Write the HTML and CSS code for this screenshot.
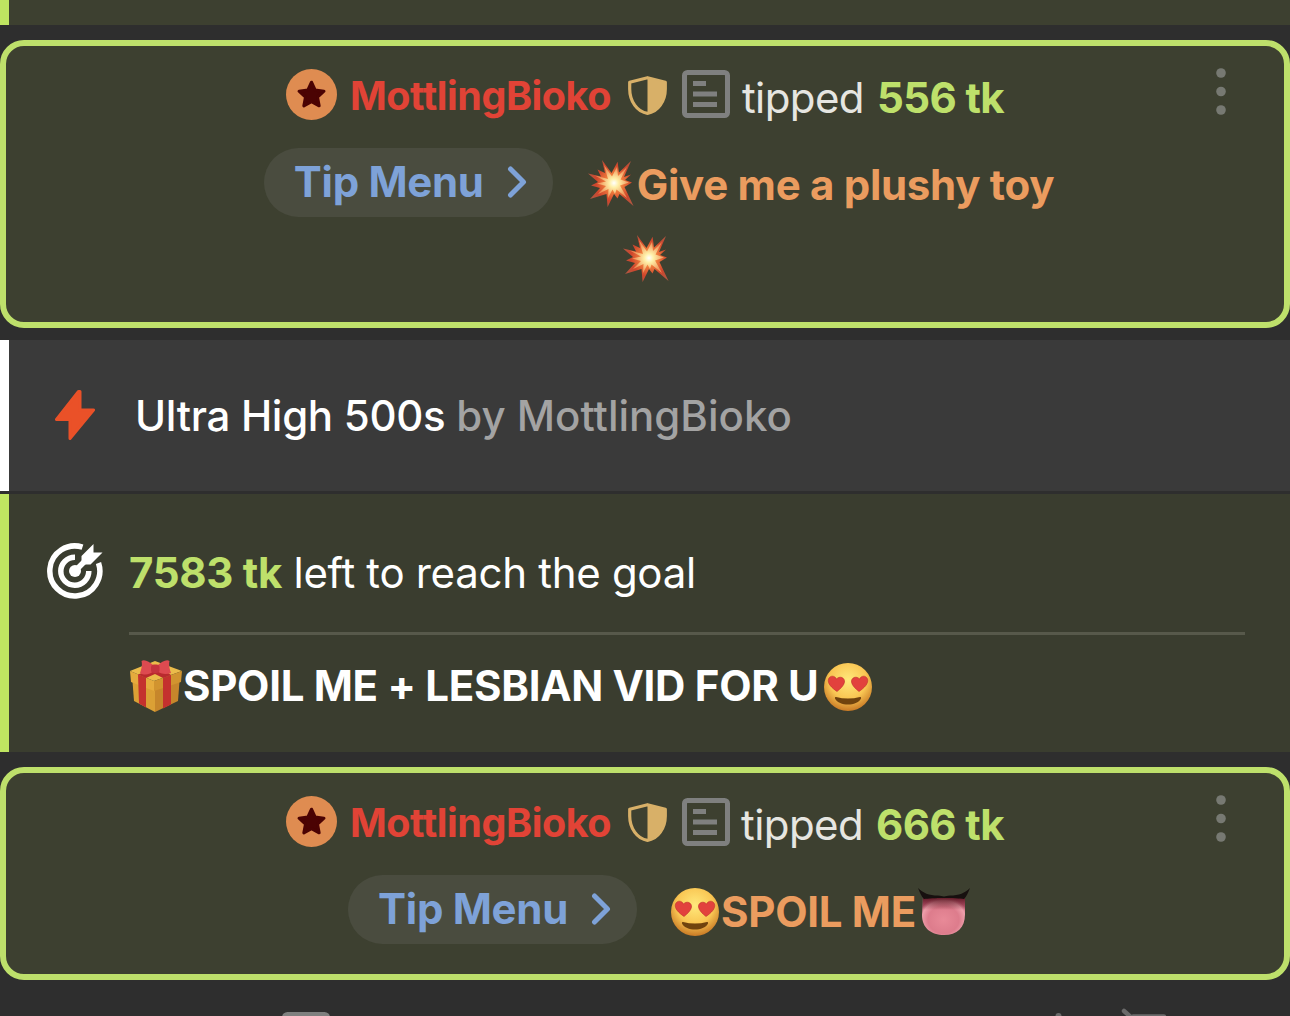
FILE: index.html
```
<!DOCTYPE html>
<html lang="en">
<head>
  <meta charset="UTF-8">
  <meta name="viewport" content="width=device-width, initial-scale=1.0">
  <title>Chat</title>
  <link rel="stylesheet" href="styles.css">
</head>
<body>
  <!-- shared icons -->
  <svg class="sprite" width="0" height="0">
    <defs>
      <radialGradient id="face-fill" cx="50%" cy="36%" r="64%">
        <stop offset="0" stop-color="#ffe97c"/>
        <stop offset="0.6" stop-color="#f9c653"/>
        <stop offset="1" stop-color="#c97a25"/>
      </radialGradient>
      <radialGradient id="boom-red" gradientUnits="userSpaceOnUse" cx="26" cy="23" r="26">
        <stop offset="0" stop-color="#ffd766"/>
        <stop offset="0.35" stop-color="#ee7a3c"/>
        <stop offset="0.7" stop-color="#cf452c"/>
        <stop offset="1" stop-color="#b4553f"/>
      </radialGradient>
      <radialGradient id="boom-core" gradientUnits="userSpaceOnUse" cx="26" cy="23" r="15">
        <stop offset="0" stop-color="#ffffff"/>
        <stop offset="0.3" stop-color="#fff0a8"/>
        <stop offset="1" stop-color="#ef955a"/>
      </radialGradient>
      <radialGradient id="tongue-fill" cx="50%" cy="60%" r="60%">
        <stop offset="0" stop-color="#e88a98"/>
        <stop offset="0.6" stop-color="#dd7c8c"/>
        <stop offset="0.85" stop-color="#ee9fab"/>
        <stop offset="1" stop-color="#c9607a"/>
      </radialGradient>
      <linearGradient id="tongue-shade" x1="0" y1="0" x2="0" y2="1">
        <stop offset="0" stop-color="#5a1722"/>
        <stop offset="1" stop-color="#5a1722" stop-opacity="0"/>
      </linearGradient>
    </defs>
    <symbol id="star" viewBox="0 0 50 50">
      <circle cx="25" cy="25" r="25" fill="#df8c51"/>
      <path d="M25 13l3.6 7.7 8.6 1.1-6.3 5.9 1.6 8.4-7.5-4.1-7.5 4.1 1.6-8.4-6.3-5.9 8.6-1.1z" fill="#4b0303" stroke="#4b0303" stroke-width="3" stroke-linejoin="round"/>
    </symbol>
    <symbol id="shield" viewBox="0 0 39 39">
      <path d="M19.500 1.700L37.300 6.300V13C37.300 25 30 36 19.500 37.300 9 36 1.700 25 1.700 13V6.300z" fill="none" stroke="#d8b068" stroke-width="3.200" stroke-linejoin="round"/>
      <path d="M19.500 1.700L37.300 6.300V13C37.300 25 30 36 19.500 37.300z" fill="#d8b068"/>
    </symbol>
    <symbol id="note" viewBox="0 0 48 48">
      <rect x="2.500" y="2.500" width="43" height="43" rx="3" fill="none" stroke="#7f807f" stroke-width="5"/>
      <path d="M11 13.500h13M11 24h24M11 34.500h24" stroke="#7f807f" stroke-width="5.200"/>
    </symbol>
    <symbol id="dots" viewBox="0 0 10 48">
      <circle cx="5" cy="5" r="4.800"/><circle cx="5" cy="23.500" r="4.800"/><circle cx="5" cy="42" r="4.800"/>
    </symbol>
    <symbol id="chevron" viewBox="0 0 20 32">
      <path d="M3.500 3l13 13-13 13" fill="none" stroke="#7ea2d8" stroke-width="5" stroke-linecap="round" stroke-linejoin="round"/>
    </symbol>
    <symbol id="boom" viewBox="0 0 46 48">
      <path d="M14 0L23.500 13 29.600 1.700 31 12.500 43 1 36 17 43 14.500 37 20 44 22.600 36.500 27 45.500 46 31.500 34 29.500 38.500 26 34 19.600 47 18.500 34 2 39 12 28 3 25.500 10 22 0 13.500 13 16.500 9.500 9.500 17 13z" fill="url(#boom-red)"/>
      <path d="M16 5L24 16.500 29 7 30 16 39 7 32.500 19.500 41 22.600 32 25.500 39 38 28.500 29.500 27 34 24.500 29.500 20 38 20.500 29 10 34 18 26 9 23.500 18 21.500 7 15.500 20 19z" fill="url(#boom-core)"/>
    </symbol>
    <symbol id="love" viewBox="0 0 50 50">
      <circle cx="25" cy="25" r="24" fill="url(#face-fill)"/>
      <path d="M14 29.500C9 26 4 21.500 5.500 17 7 13 12 13.500 13.500 17c3-3.500 8.500-1.500 8 3-.6 4-4.500 7-7.500 9.500zM36 29.500c5-3.500 10-8 8.500-12.500C43 13 38 13.500 36.500 17c-3-3.500-8.500-1.500-8 3 .6 4 4.500 7 7.500 9.500z" fill="#e2413d" stroke="#bd302c" stroke-width=".6"/>
      <path d="M13 35q12 3 24 0c1 0 1.300.7 1 1.500-4 8-22 8-26 0-.3-.8 0-1.500 1-1.500z" fill="#70430e"/>
    </symbol>
    <symbol id="gift" viewBox="0 0 52 52">
      <path d="M2 15l23 8v29L4 41z" fill="#dba035"/>
      <path d="M50 15l-25 8v29l23-11z" fill="#c6862b"/>
      <path d="M0 11L25 1l27 10-28 10z" fill="#ebbb4a"/>
      <path d="M0 11l24 10v10L1 22z" fill="#e5ab3d"/>
      <path d="M52 11L24 21v10l27-9z" fill="#d1942f"/>
      <path d="M8 14.500l8 3.300V47.500l-7-4zM41 15l-8 3V48.500l8-4z" fill="#c4312e"/>
      <path d="M8 14.500L20 10h14l7 5-8 3-8-4-9 4z" fill="#b92a2e"/>
      <path d="M24 6C19 1 14-1 11.500 1c1 4 0 8-1.500 12 5 3 10 1 14.500-2zM27 6c5-5 10-7 12.500-5-1 4 0 8 1.500 12-5 2-10 1-14.500-2z" fill="#dd4a50"/>
      <rect x="21" y="4.500" width="8.500" height="8.500" rx="3" fill="#c4333e"/>
    </symbol>
    <symbol id="tongue" viewBox="0 0 52 48">
      <path d="M5 9h42v17c0 14-8 21-21 21S4 40 4 27z" fill="url(#tongue-fill)"/>
      <path d="M5 9h42v13H5z" fill="url(#tongue-shade)"/>
      <path d="M0 0c5 5 11 7.500 20 7.500 3 0 4 1 6 1s3-1 6-1C41 7.500 47 5 52 0c-2 5-3.500 8.500-6 11-7-1.500-33-1.500-40 0C3.500 8.500 2 5 0 0z" fill="#17100f"/>
    </symbol>
  </svg>

  <main class="chat">
    <div class="strip"></div>

    <div class="tip tip-first">
      <div class="tip-line">
        <svg class="star"><use href="#star"/></svg>
        <span class="user">MottlingBioko</span>
        <svg class="shield"><use href="#shield"/></svg>
        <svg class="note"><use href="#note"/></svg>
        <span class="tipped">tipped</span>
        <span class="amount">556 tk</span>
      </div>
      <div class="menu-line">
        <span class="pill">Tip Menu <svg class="chevron"><use href="#chevron"/></svg></span>
        <svg class="boom"><use href="#boom"/></svg>
        <span class="item">Give me a plushy toy</span>
      </div>
      <div class="wrap-line">
        <svg class="boom"><use href="#boom"/></svg>
      </div>
      <svg class="dots"><use href="#dots"/></svg>
    </div>

    <div class="notice">
      <svg class="bolt" viewBox="0 0 40 50"><path d="M23.500 1.500L1.500 29.500H15V48.500L38.500 20H25V1.500z" fill="#ea5128" stroke="#ea5128" stroke-width="3" stroke-linejoin="round"/></svg>
      <p class="notice-text">Ultra High 500s <span>by MottlingBioko</span></p>
    </div>

    <div class="goal">
      <svg class="target" viewBox="0 0 56 56">
        <g fill="none" stroke="#fff" stroke-width="5.500">
          <path d="M35.500 4.200A25 25 0 1 0 51.500 20"/>
          <path d="M28 14.200A14 14 0 1 0 41.800 28"/>
        </g>
        <circle cx="28" cy="28" r="6" fill="#fff"/>
        <path d="M28 28L41 15" stroke="#fff" stroke-width="5.500"/>
        <path d="M34.500 21.500V13L46.500 1V9.500H55.500L43.500 21.500z" fill="#fff"/>
      </svg>
      <div class="goal-body">
        <p class="goal-left"><b>7583 tk</b> left to reach the goal</p>
        <div class="goal-title">
          <svg class="gift"><use href="#gift"/></svg>
          <span>SPOIL ME + LESBIAN VID FOR U</span>
          <svg class="love"><use href="#love"/></svg>
        </div>
      </div>
    </div>

    <div class="tip tip-second">
      <div class="tip-line">
        <svg class="star"><use href="#star"/></svg>
        <span class="user">MottlingBioko</span>
        <svg class="shield"><use href="#shield"/></svg>
        <svg class="note"><use href="#note"/></svg>
        <span class="tipped">tipped</span>
        <span class="amount">666 tk</span>
      </div>
      <div class="menu-line">
        <span class="pill">Tip Menu <svg class="chevron"><use href="#chevron"/></svg></span>
        <svg class="love"><use href="#love"/></svg>
        <span class="item">SPOIL ME</span>
        <svg class="tongue"><use href="#tongue"/></svg>
      </div>
      <svg class="dots"><use href="#dots"/></svg>
    </div>

    <div class="next">
      <svg class="next-note"><use href="#note"/></svg>
      <svg class="next-icons" viewBox="0 0 110 10">
        <circle cx="3.500" cy="9" r="3" fill="#6b6b6b"/>
        <path d="M69 4l9 8M78 9.500h31" fill="none" stroke="#6b6b6b" stroke-width="4.500" stroke-linecap="round"/>
      </svg>
    </div>
  </main>
</body>
</html>
```
FILE: styles.css
```
* {
  box-sizing: border-box;
}
body {
  margin: 0;
  background: #2e2e2e;
  color: #fff;
  font-family: Inter, "Liberation Sans", sans-serif;
  font-size: 42px;
  line-height: 52px;
  letter-spacing: -0.3px;
}
p {
  margin: 0;
}
svg {
  display: block;
  flex: none;
}
.sprite {
  position: absolute;
}
.chat {
  height: 1016px;
  overflow: hidden;
}
.strip {
  height: 25px;
  border-left: 9px solid #bfe561;
  background: #3d4030;
}

/* tip cards */
.tip {
  position: relative;
  border: 6px solid #bee06b;
  border-radius: 24px;
  background: #3d4030;
  padding-top: 22px;
  white-space: nowrap;
}
.tip-first {
  height: 288px;
  margin: 15px 0 12px;
}
.tip-second {
  height: 213px;
  margin-top: 15px;
}
.tip-line {
  display: flex;
  justify-content: center;
  align-items: center;
  height: 52px;
}
.star {
  width: 51px;
  height: 51px;
  margin-right: 13px;
}
.user {
  color: #e14336;
  font-size: 39.500px;
  font-weight: 700;
  letter-spacing: -0.45px;
  padding-top: 3px;
}
.shield {
  width: 39px;
  height: 39px;
  margin: 2px 15px 0 17px;
}
.note {
  width: 48px;
  height: 48px;
}
.tip-second .note {
  margin-top: 2px;
}
.tipped {
  color: #e6e6e1;
  letter-spacing: -0.6px;
  padding-top: 7px;
  margin: 0 13px 0 12px;
}
.tip-second .tipped {
  margin-left: 11px;
}
.amount {
  color: #bee06b;
  font-weight: 700;
  letter-spacing: -0.6px;
  padding-top: 7px;
}
.menu-line {
  display: flex;
  justify-content: center;
  align-items: center;
  height: 69px;
  margin-top: 28px;
  padding-left: 28px;
}
.pill {
  display: flex;
  align-items: center;
  justify-content: space-between;
  width: 289px;
  height: 69px;
  padding: 0 26px 2px 30px;
  border-radius: 35px;
  background: #4a4c3f;
  color: #7ea2d8;
  font-weight: 700;
  margin-right: 35px;
}
.chevron {
  width: 20px;
  height: 32px;
}
.boom {
  width: 46px;
  height: 48px;
  margin: 2px 3px 0 0;
}
.item {
  color: #eb9c5f;
  font-weight: 700;
  padding-top: 4px;
}
.wrap-line {
  display: flex;
  justify-content: center;
  padding: 16px 0 0 5px;
}
.love {
  width: 50px;
  height: 50px;
}
.menu-line .love {
  margin: 4px 1px 0 -2px;
}
.tongue {
  width: 52px;
  height: 48px;
  margin: 4px 0 0 2px;
}
.dots {
  position: absolute;
  top: 22px;
  right: 58px;
  width: 10px;
  height: 48px;
  fill: #777972;
}

/* notices */
.notice {
  display: flex;
  align-items: center;
  height: 151px;
  margin-bottom: 3px;
  padding-left: 46px;
  border-left: 9px solid #fff;
  background: #3a3a3a;
}
.bolt {
  width: 40px;
  height: 50px;
  margin: -1px 40px 0 0;
}
.notice-text {
  font-weight: 500;
}
.notice-text span {
  color: #a3a3a3;
  font-weight: 450;
  letter-spacing: 0;
}
.goal {
  display: flex;
  height: 258px;
  padding: 49px 45px 0 38px;
  border-left: 9px solid #bfe561;
  background: #3a3d2f;
}
.target {
  width: 56px;
  height: 56px;
  margin-right: 26px;
}
.goal-body {
  flex: 1;
}
.goal-left {
  height: 92px;
  padding-top: 4px;
  border-bottom: 3px solid #57594b;
}
.goal-left b {
  color: #bee06b;
  font-weight: 700;
}
.goal-title {
  display: flex;
  align-items: center;
  height: 52px;
  margin-top: 25px;
  white-space: nowrap;
  font-weight: 700;
}
.gift {
  width: 52px;
  height: 52px;
  margin: 0 1px 0 1px;
}
.goal-title .love {
  margin: 1px 0 0 4px;
}

.next {
  display: flex;
  justify-content: space-between;
  padding: 32px 125px 0 282px;
}
.next-note {
  width: 48px;
  height: 48px;
}
.next-icons {
  width: 110px;
  height: 10px;
  overflow: visible;
  margin-top: -5px;
}
```
